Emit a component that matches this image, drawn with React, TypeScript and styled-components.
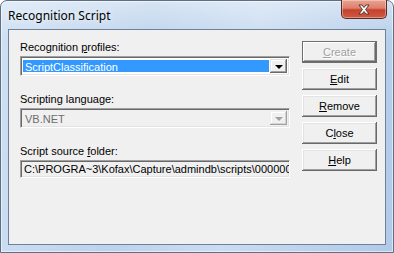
import React from 'react';
import styled, { createGlobalStyle, css } from 'styled-components';

const GlobalStyle = createGlobalStyle`
  html, body {
    margin: 0;
    padding: 0;
    background: #ffffff;
  }
  body {
    width: 394px;
    height: 253px;
    overflow: hidden;
  }
`;

const Window = styled.div`
  box-sizing: border-box;
  width: 394px;
  height: 253px;
  display: flex;
  flex-direction: column;
  padding: 0 7px 7px 7px;
  border: 1px solid #5e6f84;
  border-radius: 7px 7px 0 0;
  background:
    linear-gradient(180deg, rgba(255, 255, 255, 0.4) 0%, rgba(255, 255, 255, 0) 40px),
    linear-gradient(100deg, #cfe0f3 0%, #bcd3ec 35%, #cadcf1 60%, #b0cae8 100%);
  box-shadow: inset 0 0 0 1px rgba(255, 255, 255, 0.55);
`;

const TitleBar = styled.div`
  height: 28px;
  display: flex;
  justify-content: space-between;
  align-items: flex-start;
`;

const Title = styled.span`
  margin-top: 7px;
  font-family: 'Noto Sans', 'Open Sans', sans-serif;
  font-size: 12px;
  line-height: 16px;
  color: #000;
  text-shadow: 0 0 6px rgba(255, 255, 255, 0.9);
`;

const CloseBox = styled.div`
  box-sizing: border-box;
  width: 46px;
  height: 19px;
  margin-right: -1px;
  margin-top: -1px;
  display: flex;
  align-items: center;
  justify-content: center;
  border: 1px solid #5a2a25;
  border-top: none;
  border-radius: 0 0 5px 5px;
  background: linear-gradient(180deg, #eaa391 0%, #dc806c 45%, #c5412c 55%, #d05a42 100%);
  box-shadow: inset 0 0 0 1px rgba(255, 255, 255, 0.35);
`;

const Client = styled.div`
  flex: 1;
  display: flex;
  gap: 12px;
  padding: 11px 9px 0 11px;
  background: #f0f0f0;
  border: 1px solid #6f8196;
  font-family: 'Liberation Sans', Arial, sans-serif;
  font-size: 11px;
  color: #000;
`;

const FieldColumn = styled.div`
  width: 270px;
  display: flex;
  flex-direction: column;
`;

const Label = styled.div<{ $first?: boolean }>`
  line-height: 13px;
  height: 13px;
  margin-top: ${({ $first }) => ($first ? '0' : '17px')};
  margin-bottom: 2px;
  white-space: nowrap;
`;

const Key = styled.span`
  text-decoration: underline;
  text-underline-offset: 1px;
`;

const sunken = css`
  box-sizing: border-box;
  border-top: 1px solid #a0a0a0;
  border-left: 1px solid #a0a0a0;
  border-right: 1px solid #ffffff;
  border-bottom: 1px solid #ffffff;
  box-shadow: inset 1px 1px #696969, inset -1px -1px #e3e3e3;
`;

const Combo = styled.div<{ $disabled?: boolean }>`
  ${sunken}
  height: 20px;
  display: flex;
  padding: 2px;
  background: ${({ $disabled }) => ($disabled ? '#f0f0f0' : '#ffffff')};
`;

const ComboText = styled.div<{ $selected?: boolean; $disabled?: boolean }>`
  flex: 1;
  margin: 1px 1px 1px 0;
  padding-left: 2px;
  line-height: 14px;
  white-space: nowrap;
  overflow: hidden;
  color: ${({ $selected, $disabled }) => ($selected ? '#fff' : $disabled ? '#6d6d6d' : '#000')};
  background: ${({ $selected }) => ($selected ? '#3399ff' : 'transparent')};
`;

const DropButton = styled.div<{ $disabled?: boolean }>`
  box-sizing: border-box;
  width: 17px;
  display: flex;
  align-items: center;
  justify-content: center;
  background: #f0f0f0;
  box-shadow:
    inset -1px -1px #696969,
    inset 1px 1px #e3e3e3,
    inset -2px -2px #a0a0a0,
    inset 2px 2px #ffffff;
  ${({ $disabled }) => $disabled && css`
    box-shadow:
      inset -1px -1px #a0a0a0,
      inset 1px 1px #f0f0f0,
      inset -2px -2px #d4d4d4,
      inset 2px 2px #ffffff;
  `}
`;

const Arrow = styled.div<{ $disabled?: boolean }>`
  width: 0;
  height: 0;
  margin-top: 1px;
  border-left: 4px solid transparent;
  border-right: 4px solid transparent;
  border-top: 4px solid ${({ $disabled }) => ($disabled ? '#a0a0a0' : '#000')};
`;

const PathField = styled.div`
  ${sunken}
  height: 18px;
  padding: 0 3px;
  line-height: 16px;
  background: #f0f0f0;
  white-space: nowrap;
  overflow: hidden;
`;

const ButtonColumn = styled.div`
  display: flex;
  flex-direction: column;
  gap: 5px;
`;

const PushButton = styled.div<{ $disabled?: boolean; $default?: boolean }>`
  box-sizing: border-box;
  width: 75px;
  height: 22px;
  display: flex;
  align-items: center;
  justify-content: center;
  background: #f0f0f0;
  color: ${({ $disabled }) => ($disabled ? '#a0a0a0' : '#000')};
  text-shadow: ${({ $disabled }) => ($disabled ? '1px 1px #ffffff' : 'none')};
  box-shadow:
    inset -1px -1px #696969,
    inset 1px 1px #ffffff,
    inset -2px -2px #a0a0a0,
    inset 2px 2px #e3e3e3;
  ${({ $default }) => $default && css`
    box-shadow:
      inset 0 0 0 1px #6e6e6e,
      inset -2px -2px #696969,
      inset 2px 2px #ffffff,
      inset -3px -3px #a0a0a0;
  `}
`;

const CloseIcon = () => (
  <svg width="14" height="11" viewBox="0 0 14 11">
    <path
      d="M2 1 L5 1 L7 3.5 L9 1 L12 1 L8.6 5.5 L12 10 L9 10 L7 7.5 L5 10 L2 10 L5.4 5.5 Z"
      fill="#ffffff"
      stroke="#4a2a26"
      strokeWidth="0.9"
      strokeLinejoin="round"
    />
  </svg>
);

const buttons = [
  { pre: '', key: 'C', post: 'reate', disabled: true, isDefault: true },
  { pre: '', key: 'E', post: 'dit' },
  { pre: '', key: 'R', post: 'emove' },
  { pre: 'C', key: 'l', post: 'ose' },
  { pre: '', key: 'H', post: 'elp' },
];

const App = () => (
  <>
    <GlobalStyle />
    <Window>
      <TitleBar>
        <Title>Recognition Script</Title>
        <CloseBox>
          <CloseIcon />
        </CloseBox>
      </TitleBar>
      <Client>
        <FieldColumn>
          <Label $first>
            Recognition <Key>p</Key>rofiles:
          </Label>
          <Combo>
            <ComboText $selected>ScriptClassification</ComboText>
            <DropButton>
              <Arrow />
            </DropButton>
          </Combo>
          <Label>Scripting language:</Label>
          <Combo $disabled>
            <ComboText $disabled>VB.NET</ComboText>
            <DropButton $disabled>
              <Arrow $disabled />
            </DropButton>
          </Combo>
          <Label>
            Script source <Key>f</Key>older:
          </Label>
          <PathField>C:\PROGRA~3\Kofax\Capture\admindb\scripts\000000</PathField>
        </FieldColumn>
        <ButtonColumn>
          {buttons.map((b) => (
            <PushButton key={b.pre + b.key + b.post} $disabled={b.disabled} $default={b.isDefault}>
              <span>
                {b.pre}
                <Key>{b.key}</Key>
                {b.post}
              </span>
            </PushButton>
          ))}
        </ButtonColumn>
      </Client>
    </Window>
  </>
);

export default App;
